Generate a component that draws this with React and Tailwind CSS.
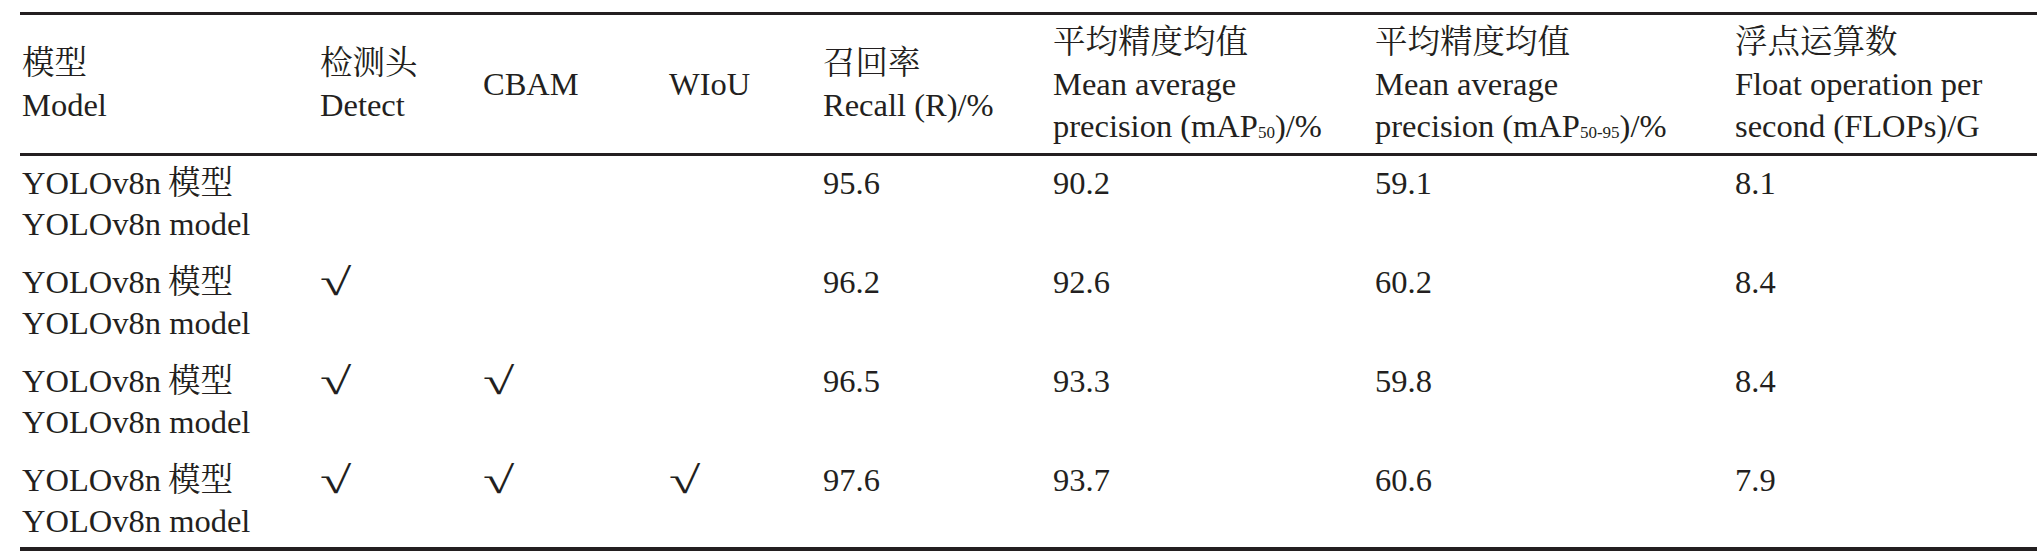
import React from "react";

const font = {
  fontFamily:
    '"Liberation Serif", "Noto Serif CJK SC", "Noto Sans CJK SC", serif',
};

const cols =
  "grid grid-cols-[298px_163px_186px_154px_230px_322px_360px_1fr]";

const Sub = ({ children }) => (
  <sub className="text-[17px] bottom-[-1px]">{children}</sub>
);

const headers = [
  ["模型", "Model"],
  ["检测头", "Detect"],
  ["CBAM"],
  ["WIoU"],
  ["召回率", "Recall (R)/%"],
  [
    "平均精度均值",
    "Mean average",
    <>
      precision (mAP<Sub>50</Sub>)/%
    </>,
  ],
  [
    "平均精度均值",
    "Mean average",
    <>
      precision (mAP<Sub>50-95</Sub>)/%
    </>,
  ],
  ["浮点运算数", "Float operation per", "second (FLOPs)/G"],
];

const rows = [
  { detect: false, cbam: false, wiou: false, r: "95.6", m50: "90.2", m5095: "59.1", flops: "8.1" },
  { detect: true, cbam: false, wiou: false, r: "96.2", m50: "92.6", m5095: "60.2", flops: "8.4" },
  { detect: true, cbam: true, wiou: false, r: "96.5", m50: "93.3", m5095: "59.8", flops: "8.4" },
  { detect: true, cbam: true, wiou: true, r: "97.6", m50: "93.7", m5095: "60.6", flops: "7.9" },
];

const Line = ({ children, h = "h-[41px] leading-[41px]" }) => (
  <div className={`${h} whitespace-nowrap`}>{children}</div>
);

// tick mark, stretched to the wide thin √ of the original table
const Check = ({ on }) =>
  on ? (
    <Line>
      <span className="inline-block font-['DejaVu_Sans',serif] font-extralight text-[38px] leading-[41px] scale-x-[1.5] origin-left">
        √
      </span>
    </Line>
  ) : null;

export default function App() {
  return (
    <div
      className="bg-white w-[2044px] h-[554px] pt-[12px] pl-[20px] text-[#231f20] text-[32.5px]"
      style={font}
    >
      <div className="w-[2017px] border-t-[3px] border-b-[4px] border-[#231f20]">
        <div className={`${cols} items-center py-[6px] border-b-[3px] border-[#231f20]`}>
          {headers.map((lines, i) => (
            <div key={i} className="pl-[2px]">
              {lines.map((l, j) => (
                <Line key={j} h="h-[42px] leading-[42px]">
                  {l}
                </Line>
              ))}
            </div>
          ))}
        </div>

        {rows.map((row, i) => (
          <div
            key={i}
            className={`${cols} pt-[7px] ${i === rows.length - 1 ? "pb-[5px]" : "pb-[10px]"}`}
          >
            <div className="pl-[2px]">
              <Line>
                YOLOv8n<span className="ml-[7px]">模型</span>
              </Line>
              <Line>YOLOv8n model</Line>
            </div>
            <div className="pl-[2px]">
              <Check on={row.detect} />
            </div>
            <div className="pl-[2px]">
              <Check on={row.cbam} />
            </div>
            <div className="pl-[2px]">
              <Check on={row.wiou} />
            </div>
            <div className="pl-[2px]">
              <Line>{row.r}</Line>
            </div>
            <div className="pl-[2px]">
              <Line>{row.m50}</Line>
            </div>
            <div className="pl-[2px]">
              <Line>{row.m5095}</Line>
            </div>
            <div className="pl-[2px]">
              <Line>{row.flops}</Line>
            </div>
          </div>
        ))}
      </div>
    </div>
  );
}
